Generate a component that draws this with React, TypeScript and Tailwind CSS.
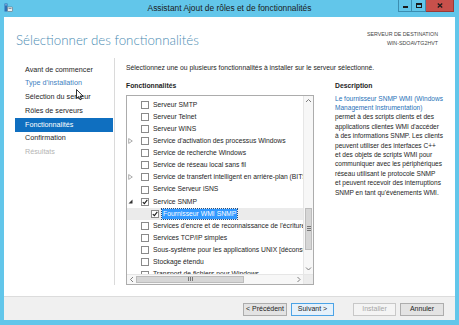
type Row = {
  label: string;
  expand?: 'open' | 'closed';
  checked?: boolean;
  level?: number;
  selected?: boolean;
};

const rows: Row[] = [
  { label: 'Serveur SMTP' },
  { label: 'Serveur Telnet' },
  { label: 'Serveur WINS' },
  { label: "Service d'activation des processus Windows", expand: 'closed' },
  { label: 'Service de recherche Windows' },
  { label: 'Service de réseau local sans fil' },
  { label: 'Service de transfert intelligent en arrière-plan (BITS)', expand: 'closed' },
  { label: 'Service Serveur iSNS' },
  { label: 'Service SNMP', expand: 'open', checked: true },
  { label: 'Fournisseur WMI SNMP', level: 1, checked: true, selected: true },
  { label: "Services d'encre et de reconnaissance de l'écriture manuscrite" },
  { label: 'Services TCP/IP simples' },
  { label: 'Sous-système pour les applications UNIX [déconseillé]' },
  { label: 'Stockage étendu' },
  { label: 'Transport de fichiers pour Windows' },
];

const steps = [
  { label: 'Avant de commencer' },
  { label: "Type d'installation", tone: 'link' },
  { label: 'Sélection du serveur' },
  { label: 'Rôles de serveurs' },
  { label: 'Fonctionnalités', tone: 'active' },
  { label: 'Confirmation' },
  { label: 'Résultats', tone: 'off' },
];

const description = [
  'permet à des scripts clients et des',
  "applications clientes WMI d'accéder",
  'à des informations SNMP. Les clients',
  'peuvent utiliser des interfaces C++',
  'et des objets de scripts WMI pour',
  'communiquer avec les périphériques',
  'réseau utilisant le protocole SNMP',
  'et peuvent recevoir des interruptions',
  "SNMP en tant qu'événements WMI.",
];

function Chevron({ dir }: { dir: 'up' | 'down' | 'left' | 'right' }) {
  const d = {
    up: 'M1 4 L3.5 1.5 L6 4',
    down: 'M1 1.5 L3.5 4 L6 1.5',
    left: 'M4 1 L1.5 3.5 L4 6',
    right: 'M1.5 1 L4 3.5 L1.5 6',
  }[dir];
  const vertical = dir === 'up' || dir === 'down';
  return (
    <svg width={vertical ? 7 : 6} height={vertical ? 6 : 7} viewBox={vertical ? '0 0 7 6' : '0 0 6 7'}>
      <path d={d} fill="none" stroke="#707070" strokeWidth="0.9" />
    </svg>
  );
}

function Checkbox({ checked }: { checked?: boolean }) {
  return (
    <div className="w-[8px] h-[8px] border border-[#8a8a8a] bg-white flex items-center justify-center shrink-0">
      {checked && (
        <svg width="6" height="6" viewBox="0 0 6 6">
          <path d="M0.8 3.1 L2.4 4.7 L5.3 0.9" fill="none" stroke="#1e1e1e" strokeWidth="1.1" />
        </svg>
      )}
    </div>
  );
}

function TitleBar() {
  return (
    <div className="h-[17px] flex items-start shrink-0">
      <div className="w-[61px] pl-[4px] pt-[3px]">
        <svg width="9" height="9" viewBox="0 0 9 9">
          <rect x="0.5" y="0.5" width="3" height="8" fill="#2f6fb3" />
          <rect x="1.2" y="1.5" width="1.6" height="0.8" fill="#cfe6f7" />
          <rect x="3.5" y="4" width="5" height="4.5" rx="0.6" fill="#e9eef2" stroke="#5b6b78" strokeWidth="0.6" />
          <rect x="4.5" y="5.3" width="3" height="0.7" fill="#5b6b78" />
        </svg>
      </div>
      <div className="flex-1 text-center text-[8.4px] leading-[17px] text-[#1b1b1b]">
        Assistant Ajout de rôles et de fonctionnalités
      </div>
      <div className="w-[61px] flex pr-[5px]">
        <div className="w-[14px] h-[12px] border border-[#3c8db0] border-t-0 flex items-end justify-center pb-[3px]">
          <div className="w-[5px] h-[2px] bg-[#1b1b1b]" />
        </div>
        <div className="w-[14px] h-[12px] border border-[#3c8db0] border-t-0 border-l-0 flex items-center justify-center">
          <div className="w-[6px] h-[5px] border border-[#1b1b1b] border-t-2" />
        </div>
        <div className="flex-1 h-[12px] bg-[#c7504b] border border-[#9a3a36] border-t-0 border-l-0 flex items-center justify-center">
          <svg width="6" height="5" viewBox="0 0 6 5">
            <path d="M0.8 0.5 L5.2 4.5 M5.2 0.5 L0.8 4.5" stroke="#1b1b1b" strokeWidth="1.3" />
          </svg>
        </div>
      </div>
    </div>
  );
}

function Header() {
  return (
    <div className="h-[40px] flex justify-between items-start shrink-0">
      <div className="pl-[12px] pt-[14px] font-['Lato',sans-serif] font-light text-[13.3px] leading-[18px] text-[#4c8cb3]">
        Sélectionner des fonctionnalités
      </div>
      <div className="pr-[17px] pt-[13px] text-right text-[5.3px] leading-[8.6px] text-[#444]">
        <div>SERVEUR DE DESTINATION</div>
        <div>WIN-SDOAVTG2HVT</div>
      </div>
    </div>
  );
}

function Nav() {
  return (
    <div className="w-[110px] pl-[11px] pr-[1px] pt-[6px] shrink-0">
      {steps.map((s) => (
        <div
          key={s.label}
          className={
            'h-[13.8px] pl-[10px] flex items-center text-[7.2px] whitespace-nowrap ' +
            (s.tone === 'active'
              ? 'bg-[#0f6fc0] text-white'
              : s.tone === 'link'
                ? 'text-[#3f7fbf]'
                : s.tone === 'off'
                  ? 'text-[#b4b4b4]'
                  : 'text-[#1e1e1e]')
          }
        >
          {s.label}
        </div>
      ))}
    </div>
  );
}

function FeatureRow({ row }: { row: Row }) {
  const indent = row.level ? 'pl-[10px]' : '';
  return (
    <div className={'h-[12.15px] flex items-center whitespace-nowrap ' + (row.selected ? 'bg-[#ebebeb]' : '')}>
      <div className="w-[14px] shrink-0 flex items-center pl-[1px]">
        {row.expand === 'closed' && (
          <svg width="5" height="6" viewBox="0 0 5 6">
            <path d="M0.7 0.6 L4.3 3 L0.7 5.4 Z" fill="none" stroke="#8a8a8a" strokeWidth="0.7" />
          </svg>
        )}
        {row.expand === 'open' && (
          <svg width="5" height="5" viewBox="0 0 5 5">
            <path d="M4.5 0.5 L4.5 4.5 L0.5 4.5 Z" fill="#333" />
          </svg>
        )}
      </div>
      <div className={'flex items-center ' + indent}>
        <Checkbox checked={row.checked} />
        {row.selected ? (
          <span className="ml-[3px] px-[1px] h-[10px] leading-[10px] bg-[#3399ff] text-white text-[6.8px] outline outline-1 outline-dotted outline-[#1b4f8a]">
            {row.label}
          </span>
        ) : (
          <span className="ml-[4px] text-[6.75px] text-[#1e1e1e]">{row.label}</span>
        )}
      </div>
    </div>
  );
}

function ListBox() {
  return (
    <div className="w-[188px] h-[190px] border border-[#acacac] flex flex-col">
      <div className="flex flex-1 min-h-0">
        <div className="flex-1 min-w-0 overflow-hidden pt-[3px]">
          {rows.map((r) => (
            <FeatureRow key={r.label} row={r} />
          ))}
        </div>
        <div className="w-[10px] bg-[#f7f7f7] border-l border-[#e6e6e6] flex flex-col">
          <div className="h-[10px] flex items-center justify-center">
            <Chevron dir="up" />
          </div>
          <div className="h-[102px]" />
          <div className="h-[42px] mx-[1px] bg-[#d6d6d6] border border-[#bcbcbc] flex flex-col items-center justify-center gap-[1px]">
            <div className="w-[4px] h-px bg-[#777]" />
            <div className="w-[4px] h-px bg-[#777]" />
            <div className="w-[4px] h-px bg-[#777]" />
          </div>
          <div className="flex-1" />
          <div className="h-[10px] flex items-center justify-center">
            <Chevron dir="down" />
          </div>
        </div>
      </div>
      <div className="h-[10px] flex border-t border-[#e6e6e6] shrink-0">
        <div className="flex-1 bg-[#f7f7f7] flex items-stretch">
          <div className="w-[9px] flex items-center justify-center">
            <Chevron dir="left" />
          </div>
          <div className="w-[108px] my-[1px] bg-[#d6d6d6] border border-[#bcbcbc] flex items-center justify-center gap-[1px]">
            <div className="w-px h-[4px] bg-[#777]" />
            <div className="w-px h-[4px] bg-[#777]" />
            <div className="w-px h-[4px] bg-[#777]" />
          </div>
          <div className="flex-1" />
          <div className="w-[9px] flex items-center justify-center">
            <Chevron dir="right" />
          </div>
        </div>
        <div className="w-[10px] bg-[#ececec] border-l border-[#e6e6e6]" />
      </div>
    </div>
  );
}

function Content() {
  return (
    <div className="flex-1 pl-[11px] pt-[5.5px] min-w-0">
      <div className="text-[6.8px] leading-[9px] whitespace-nowrap">
        Sélectionnez une ou plusieurs fonctionnalités à installer sur le serveur sélectionné.
      </div>
      <div className="flex mt-[9px]">
        <div>
          <div className="text-[6.8px] leading-[9px] font-bold mb-[5px]">Fonctionnalités</div>
          <ListBox />
        </div>
        <div className="ml-[21px]">
          <div className="text-[6.8px] leading-[9px] font-bold">Description</div>
          <div className="mt-[4px] text-[6.55px] leading-[9.4px] whitespace-nowrap">
            <div className="text-[#1f72b8]">Le fournisseur SNMP WMI (Windows</div>
            <div className="text-[#1f72b8]">Management Instrumentation)</div>
            {description.map((l) => (
              <div key={l}>{l}</div>
            ))}
          </div>
        </div>
      </div>
    </div>
  );
}

function Button({ label, className }: { label: string; className: string }) {
  return (
    <div className={'h-[13px] flex items-center justify-center text-[7px] border ' + className}>{label}</div>
  );
}

function Footer() {
  return (
    <div className="h-[24px] bg-[#f0f0f0] border-t border-[#dcdcdc] flex justify-end items-start pt-[6px] pr-[11px] shrink-0">
      <Button label="< Précédent" className="w-[44px] bg-[#e3e3e3] border-[#adadad]" />
      <Button label="Suivant >" className="w-[43px] ml-[4px] bg-[#e5f1fb] border-[#4ba3e6]" />
      <Button label="Installer" className="w-[43px] ml-[19px] bg-[#f4f4f4] border-[#c8c8c8] text-[#a6a6a6]" />
      <Button label="Annuler" className="w-[44px] ml-[4px] bg-[#e3e3e3] border-[#adadad]" />
    </div>
  );
}

function Cursor() {
  return (
    <svg className="absolute left-[76px] top-[89px]" width="8" height="12" viewBox="0 0 8 12">
      <path d="M0.5 0.5 L0.5 9.5 L2.6 7.6 L4 10.8 L5.4 10.2 L4 7.1 L7 7.1 Z" fill="#fff" stroke="#000" strokeWidth="0.8" />
    </svg>
  );
}

export default function App() {
  return (
    <div className="relative w-[459px] h-[325px] bg-[#62c6ea] flex flex-col font-['Liberation_Sans',Arial,sans-serif] text-[#1e1e1e] overflow-hidden">
      <TitleBar />
      <div className="flex-1 mx-[4px] mb-[5px] bg-white flex flex-col min-h-0">
        <Header />
        <div className="flex flex-1 min-h-0">
          <Nav />
          <div className="w-px bg-[#dadada] mt-[1px] mb-[11px]" />
          <Content />
        </div>
        <Footer />
      </div>
      <Cursor />
    </div>
  );
}
